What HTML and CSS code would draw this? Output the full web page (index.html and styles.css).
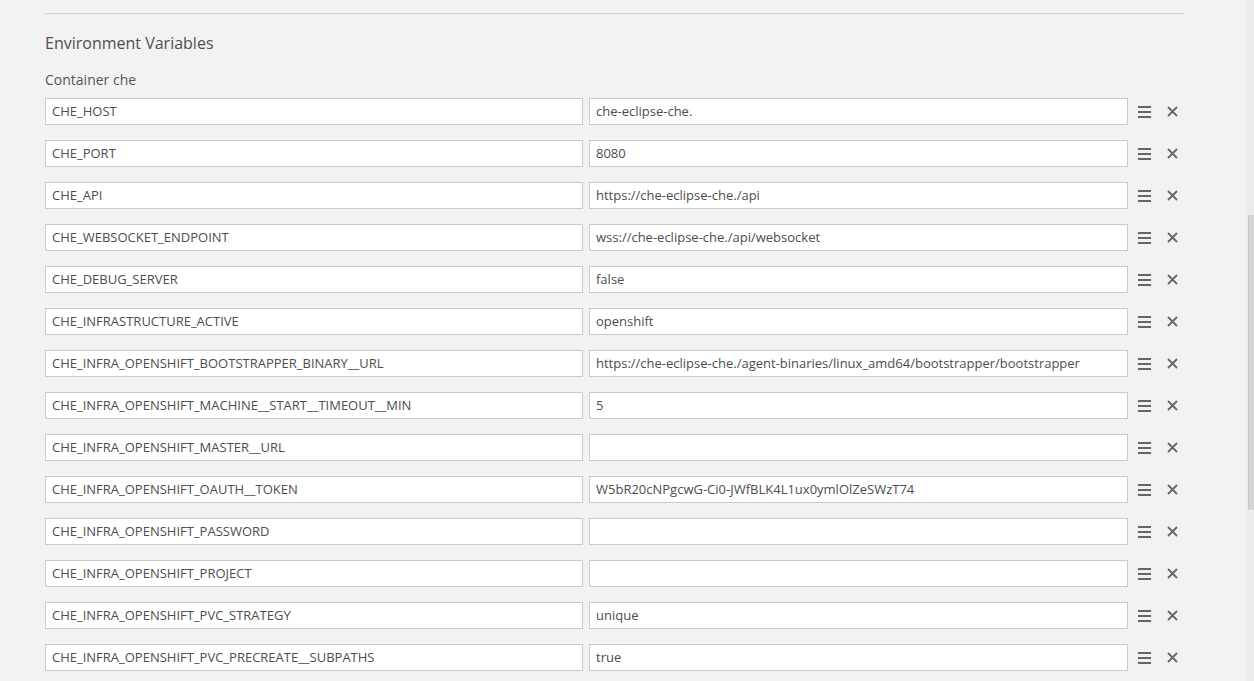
FILE: index.html
```html
<!DOCTYPE html>
<html>
<head>
<meta charset="utf-8">
<link rel="stylesheet" href="styles.css">
</head>
<body>
<div class="page">
  <main class="main">
    <div class="divider"></div>
    <h2 class="title">Environment Variables</h2>
    <div class="container-label">Container che</div>
    <div class="rows">
      <div class="row"><div class="field">CHE_HOST</div><div class="field">che-eclipse-che.</div><div class="actions"><span class="menu"><i></i><i></i><i></i></span><svg class="close" viewBox="0 0 11 11"><path d="M1 1L10 10M10 1L1 10"/></svg></div></div>
      <div class="row"><div class="field">CHE_PORT</div><div class="field">8080</div><div class="actions"><span class="menu"><i></i><i></i><i></i></span><svg class="close" viewBox="0 0 11 11"><path d="M1 1L10 10M10 1L1 10"/></svg></div></div>
      <div class="row"><div class="field">CHE_API</div><div class="field">https://che-eclipse-che./api</div><div class="actions"><span class="menu"><i></i><i></i><i></i></span><svg class="close" viewBox="0 0 11 11"><path d="M1 1L10 10M10 1L1 10"/></svg></div></div>
      <div class="row"><div class="field">CHE_WEBSOCKET_ENDPOINT</div><div class="field">wss://che-eclipse-che./api/websocket</div><div class="actions"><span class="menu"><i></i><i></i><i></i></span><svg class="close" viewBox="0 0 11 11"><path d="M1 1L10 10M10 1L1 10"/></svg></div></div>
      <div class="row"><div class="field">CHE_DEBUG_SERVER</div><div class="field">false</div><div class="actions"><span class="menu"><i></i><i></i><i></i></span><svg class="close" viewBox="0 0 11 11"><path d="M1 1L10 10M10 1L1 10"/></svg></div></div>
      <div class="row"><div class="field">CHE_INFRASTRUCTURE_ACTIVE</div><div class="field">openshift</div><div class="actions"><span class="menu"><i></i><i></i><i></i></span><svg class="close" viewBox="0 0 11 11"><path d="M1 1L10 10M10 1L1 10"/></svg></div></div>
      <div class="row"><div class="field">CHE_INFRA_OPENSHIFT_BOOTSTRAPPER_BINARY__URL</div><div class="field">https://che-eclipse-che./agent-binaries/linux_amd64/bootstrapper/bootstrapper</div><div class="actions"><span class="menu"><i></i><i></i><i></i></span><svg class="close" viewBox="0 0 11 11"><path d="M1 1L10 10M10 1L1 10"/></svg></div></div>
      <div class="row"><div class="field">CHE_INFRA_OPENSHIFT_MACHINE__START__TIMEOUT__MIN</div><div class="field">5</div><div class="actions"><span class="menu"><i></i><i></i><i></i></span><svg class="close" viewBox="0 0 11 11"><path d="M1 1L10 10M10 1L1 10"/></svg></div></div>
      <div class="row"><div class="field">CHE_INFRA_OPENSHIFT_MASTER__URL</div><div class="field"></div><div class="actions"><span class="menu"><i></i><i></i><i></i></span><svg class="close" viewBox="0 0 11 11"><path d="M1 1L10 10M10 1L1 10"/></svg></div></div>
      <div class="row"><div class="field">CHE_INFRA_OPENSHIFT_OAUTH__TOKEN</div><div class="field">W5bR20cNPgcwG-Ci0-JWfBLK4L1ux0ymlOlZeSWzT74</div><div class="actions"><span class="menu"><i></i><i></i><i></i></span><svg class="close" viewBox="0 0 11 11"><path d="M1 1L10 10M10 1L1 10"/></svg></div></div>
      <div class="row"><div class="field">CHE_INFRA_OPENSHIFT_PASSWORD</div><div class="field"></div><div class="actions"><span class="menu"><i></i><i></i><i></i></span><svg class="close" viewBox="0 0 11 11"><path d="M1 1L10 10M10 1L1 10"/></svg></div></div>
      <div class="row"><div class="field">CHE_INFRA_OPENSHIFT_PROJECT</div><div class="field"></div><div class="actions"><span class="menu"><i></i><i></i><i></i></span><svg class="close" viewBox="0 0 11 11"><path d="M1 1L10 10M10 1L1 10"/></svg></div></div>
      <div class="row"><div class="field">CHE_INFRA_OPENSHIFT_PVC_STRATEGY</div><div class="field">unique</div><div class="actions"><span class="menu"><i></i><i></i><i></i></span><svg class="close" viewBox="0 0 11 11"><path d="M1 1L10 10M10 1L1 10"/></svg></div></div>
      <div class="row"><div class="field">CHE_INFRA_OPENSHIFT_PVC_PRECREATE__SUBPATHS</div><div class="field">true</div><div class="actions"><span class="menu"><i></i><i></i><i></i></span><svg class="close" viewBox="0 0 11 11"><path d="M1 1L10 10M10 1L1 10"/></svg></div></div>
    </div>
  </main>
  <aside class="scrollbar"><div class="thumb"></div></aside>
</div>
</body>
</html>
```

FILE: styles.css
```css
html, body {
  margin: 0;
  padding: 0;
  height: 681px;
  overflow: hidden;
  background: #f2f2f2;
}
body {
  font-family: "Open Sans", "Liberation Sans", sans-serif;
  color: #555;
}
.page {
  display: flex;
  height: 681px;
}
.main {
  flex: 1;
  padding: 13px 62px 0 45px;
  min-width: 0;
}
.divider {
  border-top: 1px solid #d4d4d4;
}
.title {
  margin: 18px 0 0;
  font-size: 16px;
  line-height: 22px;
  font-weight: 400;
  color: #4f4f4f;
}
.container-label {
  margin-top: 16px;
  font-size: 14px;
  line-height: 20px;
  color: #555;
}
.rows {
  margin-top: 8px;
  display: flex;
  flex-direction: column;
  gap: 15px;
}
.row {
  display: grid;
  grid-template-columns: 538px 539px 1fr;
  column-gap: 6px;
  height: 27px;
}
.field {
  box-sizing: border-box;
  height: 27px;
  background: #fff;
  border: 1px solid #cacaca;
  padding: 0 6px;
  font-size: 13px;
  line-height: 25px;
  color: #4d4d4d;
  white-space: nowrap;
  overflow: hidden;
}
.actions {
  display: flex;
  align-items: center;
  padding-left: 4px;
  gap: 16px;
}
.menu {
  display: flex;
  flex-direction: column;
  gap: 3px;
  width: 13px;
}
.menu i {
  display: block;
  height: 2px;
  background: #666;
}
.close {
  width: 11px;
  height: 11px;
}
.close path {
  stroke: #666;
  stroke-width: 1.8;
  fill: none;
}
.scrollbar {
  width: 7px;
  background: #ebebeb;
}
.thumb {
  margin-top: 215px;
  height: 295px;
  margin-left: 1px;
  background: #d6d6d6;
  border-left: 1px solid #c6c6c6;
}
```
